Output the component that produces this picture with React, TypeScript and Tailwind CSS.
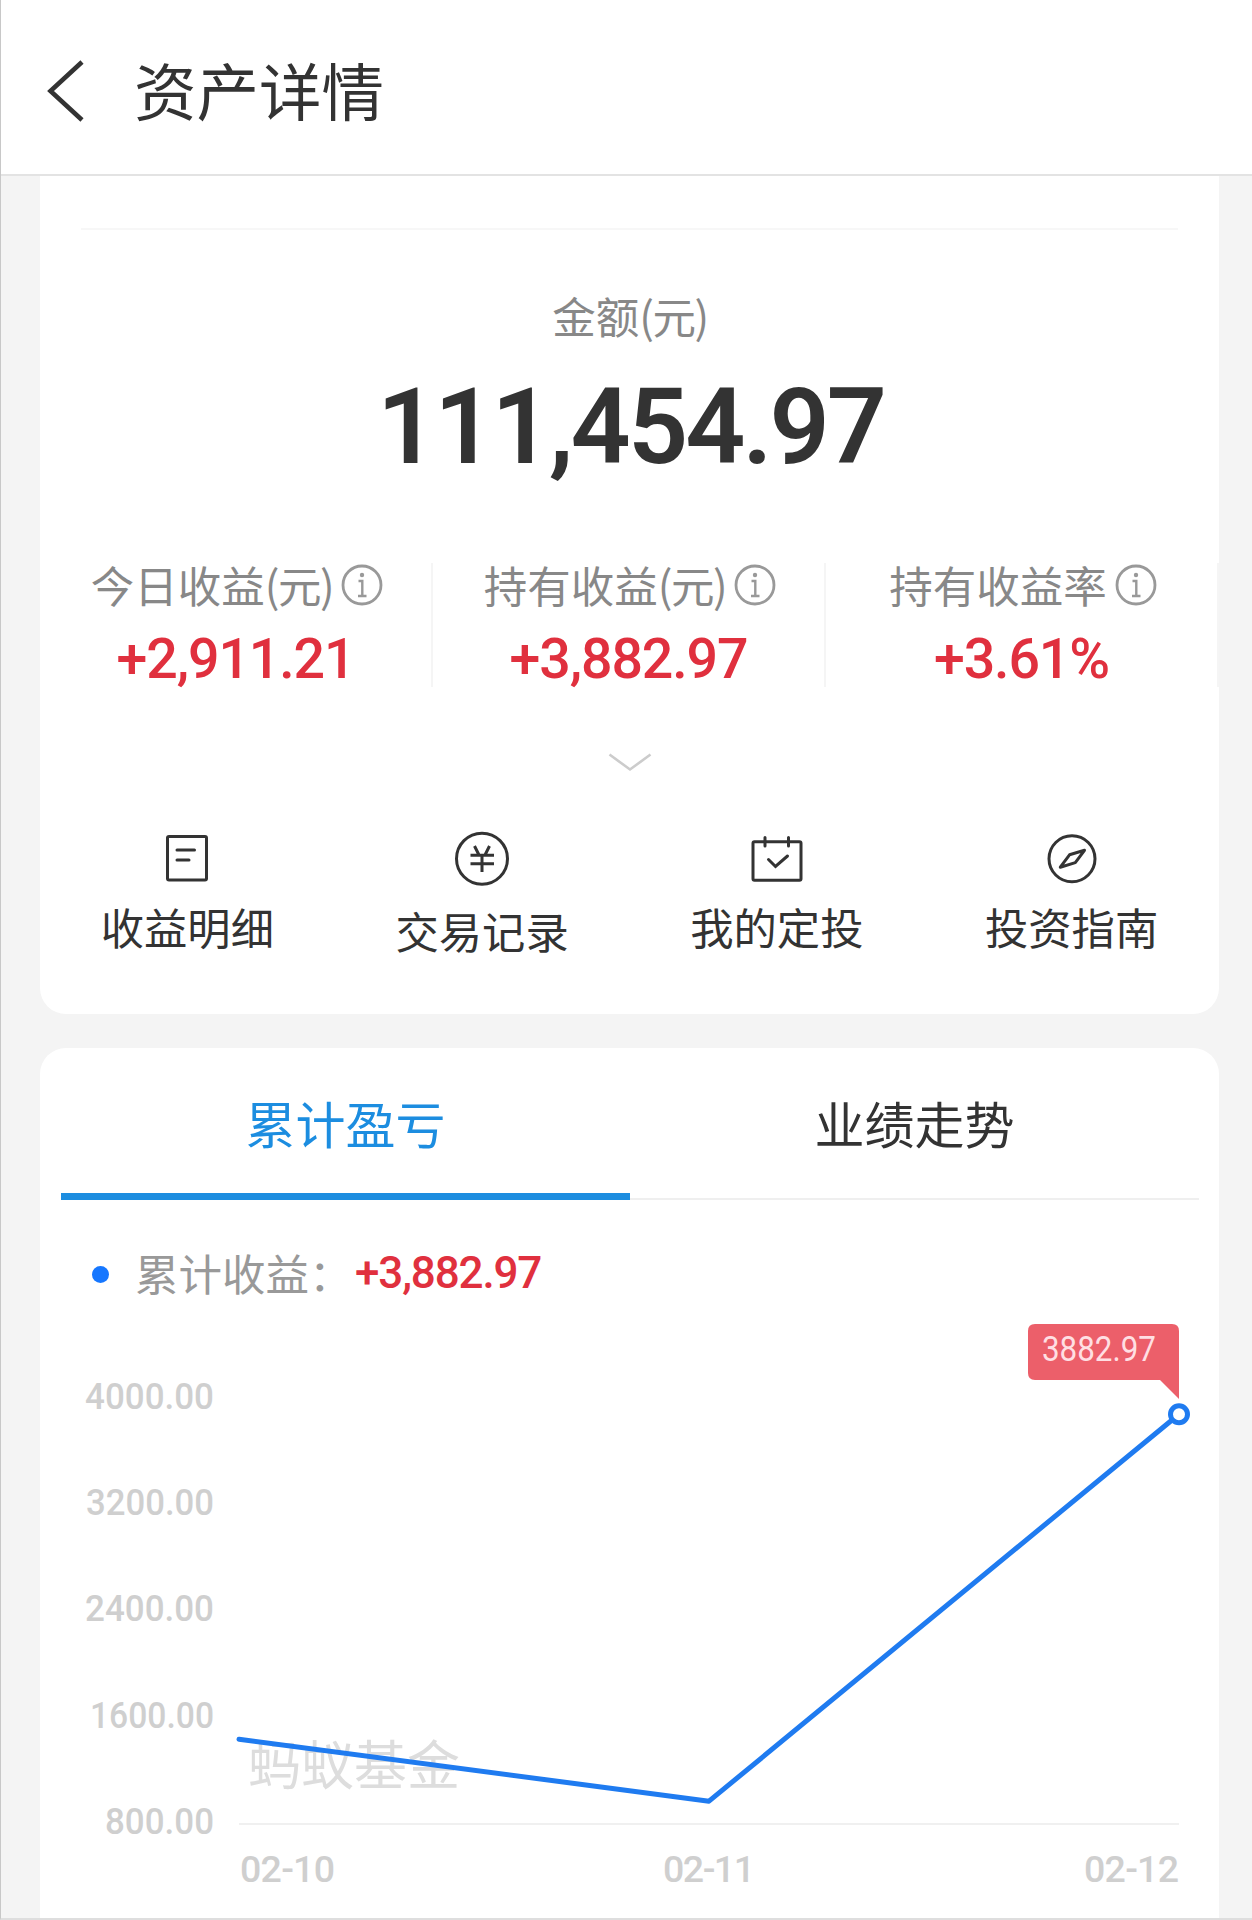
import type { ReactNode } from "react";
import { clsx } from "clsx";

interface Stat {
  label: string;
  unit?: string;
  value: string;
}

interface Action {
  label: string;
  icon: ReactNode;
  offset?: boolean;
}

interface ProfitPoint {
  date: string;
  value: number;
}

const stats: Stat[] = [
  { label: "今日收益", unit: "(元)", value: "+2,911.21" },
  { label: "持有收益", unit: "(元)", value: "+3,882.97" },
  { label: "持有收益率", value: "+3.61%" },
];

const profit: ProfitPoint[] = [
  { date: "02-10", value: 1437 },
  { date: "02-11", value: 971.76 },
  { date: "02-12", value: 3882.97 },
];

const ticks = [
  { value: 4000, width: 129 },
  { value: 3200, width: 128 },
  { value: 2400, width: 129 },
  { value: 1600, width: 124 },
  { value: 800, width: 109 },
];

const InfoIcon = () => (
  <svg className="h-[42px] w-[42px]" viewBox="0 0 42 42" fill="none" stroke="#999" strokeWidth="2.8">
    <circle cx="21" cy="21" r="19" />
    <circle cx="21" cy="11" r="2.2" fill="#999" stroke="none" />
    <path d="M17.5 17H21.3V32M17 32H25.5" strokeWidth="2.4" />
  </svg>
);

const ListIcon = () => (
  <svg className="h-[60px] w-[60px]" viewBox="0 0 60 60" fill="none" stroke="#333" strokeWidth="3">
    <rect x="10.5" y="7.5" width="39" height="43.5" rx="1.5" />
    <path d="M20 21H37.5M20 31H32" strokeLinecap="round" />
  </svg>
);

const YenIcon = () => (
  <svg className="h-[60px] w-[60px]" viewBox="0 0 60 60" fill="none" stroke="#333" strokeWidth="3">
    <circle cx="30" cy="29.7" r="25.5" />
    <path d="M22.5 17L27 26M37.5 17L33 26M18.5 26.3H42M18.5 34.7H42M30 26V43" />
  </svg>
);

const CalendarIcon = () => (
  <svg className="h-[60px] w-[60px]" viewBox="0 0 60 60" fill="none" stroke="#333" strokeWidth="3">
    <rect x="6" y="12.7" width="48" height="38.5" rx="1.5" />
    <path d="M18 8.5V17M41.5 8.5V17" strokeLinecap="round" />
    <path d="M21.5 30.5L28.5 37.5L40.5 27" strokeLinecap="round" />
  </svg>
);

const CompassIcon = () => (
  <svg className="h-[60px] w-[60px]" viewBox="0 0 60 60" fill="none" stroke="#333" strokeWidth="3">
    <circle cx="30" cy="29.7" r="23" />
    <path d="M18.3 38.2L27.5 25.8L42.5 21.3L33.3 33.6Z" strokeLinejoin="round" />
  </svg>
);

const actions: Action[] = [
  { label: "收益明细", icon: <ListIcon /> },
  { label: "交易记录", icon: <YenIcon />, offset: true },
  { label: "我的定投", icon: <CalendarIcon /> },
  { label: "投资指南", icon: <CompassIcon /> },
];

const Header = () => (
  <header className="flex h-[176px] shrink-0 items-center border-b-2 border-[#e3e3e3] bg-white pt-[8px] pl-[45px]">
    <svg className="h-[62px] w-[38px]" viewBox="0 0 38 62" fill="none" stroke="#333" strokeWidth="4.6">
      <path d="M36 2L4.5 31L36 60" />
    </svg>
    <h1 className="ml-[50px] pb-[4px] text-[62.5px] leading-[64px] text-[#333]">资产详情</h1>
  </header>
);

const SummaryCard = () => (
  <section className="mr-[33px] ml-[39px] h-[838px] shrink-0 rounded-b-[26px] bg-white pt-[52px]">
    <div className="mx-[41px] h-[2px] bg-[#f7f7f7]" />
    <p className="mt-[64px] pl-[1px] text-center text-[43.5px] leading-[44px] text-[#888]">
      金额<span className="tracking-[-1.4px]">(元)</span>
    </p>
    <p className="mt-[36px] pl-[2px] text-center font-[Roboto,sans-serif] text-[105.5px] leading-[106px] font-semibold tracking-[-3px] text-[#333]">
      111,454.97
    </p>

    <div className="mt-[83px] grid h-[121px] grid-cols-3">
      {stats.map((stat) => (
        <div key={stat.label} className="border-r-2 border-[#f5f5f5] pt-[1px] text-center">
          <div className="flex items-center justify-center gap-[8px] pl-[3px] text-[43.5px] leading-[42px] text-[#888]">
            <span className="whitespace-nowrap">
              {stat.label}
              {stat.unit && <span className="tracking-[-1.4px]">{stat.unit}</span>}
            </span>
            <InfoIcon />
          </div>
          <p className="mt-[27px] font-[Roboto,sans-serif] text-[55.5px] leading-[54px] font-medium tracking-[-1.1px] text-[#e0303e]">
            {stat.value}
          </p>
        </div>
      ))}
    </div>

    <svg className="mx-auto mt-[68px] h-[20px] w-[44px]" viewBox="0 0 44 20" fill="none" stroke="#ccc" strokeWidth="2.6">
      <path d="M1.5 2.5L22 17.5L42.5 2.5" />
    </svg>

    <div className="mt-[57px] grid grid-cols-4">
      {actions.map((action) => (
        <div key={action.label} className="flex flex-col items-center">
          {action.icon}
          <span
            className={clsx(
              "text-[43.3px] leading-[44px] text-[#333]",
              action.offset ? "mt-[19px]" : "mt-[15px]"
            )}
          >
            {action.label}
          </span>
        </div>
      ))}
    </div>
  </section>
);

const ProfitChart = () => {
  const left = 199;
  const right = 1139;
  const bottom = 524;
  const toX = (i: number) => left + (i * (right - left)) / (profit.length - 1);
  const toY = (value: number) => bottom - (value - 800) * 0.1329;
  const last = profit[profit.length - 1];

  return (
    <svg className="mt-[5px] h-[618px] w-full" viewBox="0 0 1179 618" fontFamily="Roboto, sans-serif">
      {ticks.map((tick) => (
        <text
          key={tick.value}
          x={174}
          y={toY(tick.value) + 10}
          fontSize="37.5"
          fontWeight="500"
          fill="#cfcfcf"
          textAnchor="end"
          textLength={tick.width}
          lengthAdjust="spacingAndGlyphs"
        >
          {tick.value.toFixed(2)}
        </text>
      ))}
      <line x1={left} x2={right} y1={bottom} y2={bottom} stroke="#f0f0f0" strokeWidth="2" />
      <text x="208" y="485" fontSize="53" fill="#ddd" fontFamily="'Noto Sans CJK SC', sans-serif">
        蚂蚁基金
      </text>
      <polyline
        points={profit.map((p, i) => `${toX(i)},${toY(p.value)}`).join(" ")}
        fill="none"
        stroke="#1f7bf0"
        strokeWidth="5"
        strokeLinejoin="round"
        strokeLinecap="round"
      />
      <circle cx={right} cy={toY(last.value)} r="8.5" fill="#fff" stroke="#1f7bf0" strokeWidth="5" />

      <path d="M995 24H1132Q1139 24 1139 31V99L1120 80H995Q988 80 988 73V31Q988 24 995 24Z" fill="#ec5f6a" />
      <text x="1002" y="61" fontSize="34.5" fill="#ffdfe3" textLength="114" lengthAdjust="spacingAndGlyphs">
        {last.value}
      </text>

      {profit.map((p, i) => (
        <text
          key={p.date}
          x={[200, 669, 1139][i]}
          y="582"
          fontSize="37.5"
          fontWeight="500"
          fill="#cfcfcf"
          textAnchor={(["start", "middle", "end"] as const)[i]}
          textLength={i === 1 ? 92 : 95}
          lengthAdjust="spacing"
        >
          {p.date}
        </text>
      ))}
    </svg>
  );
};

const ProfitCard = () => (
  <section className="mt-[34px] mr-[33px] ml-[39px] flex-1 rounded-t-[26px] bg-white">
    <div className="mr-[20px] ml-[21px] grid h-[152px] grid-cols-2 text-center text-[50px] leading-[50px]">
      <button className="border-b-[7px] border-[#1c8de0] pt-[2px] text-[#1c8de0]">累计盈亏</button>
      <button className="border-b-2 border-[#efefef] pb-[3px] text-[#333]">业绩走势</button>
    </div>
    <div className="mt-[51px] flex h-[44px] items-center pl-[52px] leading-[44px]">
      <span className="mt-[3px] h-[17px] w-[17px] rounded-full bg-[#1677ff]" />
      <span className="ml-[26px] w-[220px] text-[43.5px] whitespace-nowrap text-[#999]">累计收益：</span>
      <span className="font-[Roboto,sans-serif] text-[44px] font-medium tracking-[-1.15px] text-[#e0303e]">
        +3,882.97
      </span>
    </div>
    <ProfitChart />
  </section>
);

const App = () => {
  return (
    <div className="flex h-[1920px] w-[1252px] flex-col overflow-hidden border-b-2 border-l border-b-[#dedede] border-l-[#c8c8c8] bg-[#f4f4f4] font-['Noto_Sans_CJK_SC',sans-serif]">
      <Header />
      <SummaryCard />
      <ProfitCard />
    </div>
  );
};

export default App;
